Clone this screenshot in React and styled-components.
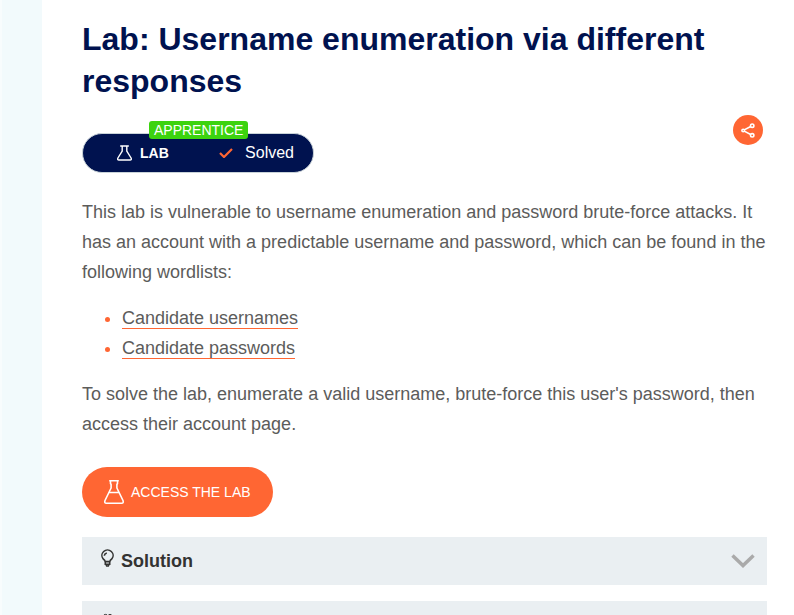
import React from "react";
import styled, { createGlobalStyle } from "styled-components";

const GlobalStyle = createGlobalStyle`
  * { box-sizing: border-box; }
  body {
    margin: 0;
    background: #fff;
    color: #5c5c5b;
    font-family: "Liberation Sans", Arial, sans-serif;
    font-size: 18px;
    line-height: 30px;
  }
`;

const Page = styled.div`
  display: flex;
  height: 100vh;
  overflow: hidden;
`;

const Rail = styled.aside`
  flex: 0 0 42px;
  background: #f2fafc;
  border-left: 2px solid #f8fcfd;
`;

const Main = styled.main`
  flex: 1;
  min-width: 0;
  padding: 18px 27px 0 40px;
`;

const Title = styled.h1`
  margin: 0;
  color: #00124f;
  font-size: 32px;
  line-height: 42px;
`;

const StatusRow = styled.div`
  display: flex;
  justify-content: space-between;
  align-items: flex-start;
  margin-top: 13px;
  padding-right: 4px;
`;

const Status = styled.div`
  position: relative;
  display: flex;
  align-items: center;
  width: 232px;
  height: 40px;
  margin-top: 18px;
  padding: 0 19px 0 34px;
  border: 1px solid #c9d3d8;
  border-radius: 20px;
  background: #00124f;
  color: #fff;
  font-size: 16px;
  line-height: 20px;
`;

const Level = styled.span`
  position: absolute;
  top: -13px;
  left: 66px;
  padding: 0 5px;
  border-radius: 3px;
  background: #3cd30f;
  font-size: 14px;
  line-height: 18px;
`;

const Kind = styled.strong`
  margin: 0 auto 0 8px;
  font-size: 14px;
`;

const Solved = styled.span`
  margin-left: 12px;
`;

const Share = styled.button`
  display: grid;
  place-items: center;
  width: 30px;
  height: 30px;
  padding: 0;
  border: 0;
  border-radius: 50%;
  background: #ff6633;
  cursor: pointer;
`;

const Text = styled.p`
  margin: ${({ $top }) => $top}px 0 0;
`;

const List = styled.ul`
  margin: 16px 0 0;
  padding-left: 40px;
  li::marker { color: #ff6633; }
`;

const WordlistLink = styled.a`
  border-bottom: 1px solid #ff6633;
  color: inherit;
  text-decoration: none;
`;

const AccessButton = styled.a`
  display: inline-flex;
  align-items: center;
  gap: 6px;
  height: 50px;
  margin-top: 28px;
  padding: 0 22px 0 21px;
  border-radius: 25px;
  background: #ff6633;
  color: #fff;
  font-size: 14px;
  line-height: 20px;
  text-decoration: none;
  vertical-align: top;
`;

const Panel = styled.button`
  display: flex;
  align-items: center;
  width: 100%;
  height: 48px;
  margin-top: ${({ $top }) => $top}px;
  padding: 0 12px 0 18px;
  border: 0;
  background: #eaeff2;
  color: #333332;
  font: bold 18px/30px "Liberation Sans", Arial, sans-serif;
  text-align: left;
  cursor: pointer;
`;

const PanelIcon = styled.svg`
  align-self: flex-start;
  margin: 12px 6px 0 0;
`;

const PanelLabel = styled.span`
  flex: 1;
`;

const Chevron = () => (
  <svg width="24" height="14" viewBox="0 0 24 14" fill="none" stroke="#aaa" strokeWidth="3.5" aria-hidden="true">
    <path d="M1.5 1.5 12 11.5 22.5 1.5" />
  </svg>
);

export default function App() {
  return (
    <>
      <GlobalStyle />
      <Page>
        <Rail />
        <Main>
          <Title>Lab: Username enumeration via different responses</Title>
          <StatusRow>
            <Status>
              <Level>APPRENTICE</Level>
              <svg width="15" height="16" viewBox="0 0 15 16" fill="none" stroke="#fff" strokeWidth="1.4" strokeLinejoin="round" aria-hidden="true">
                <path d="M3.2 1h8.6M5.2 1v5.2L.9 13q-.8 2 1 2h11.2q1.8 0 1-2L9.8 6.2V1" />
              </svg>
              <Kind>LAB</Kind>
              <svg width="14" height="10" viewBox="0 0 14 10" fill="none" stroke="#ff6633" strokeWidth="2.2" aria-hidden="true">
                <path d="M1 5l4 4 8-8" />
              </svg>
              <Solved>Solved</Solved>
            </Status>
            <Share type="button" aria-label="Share">
              <svg width="14" height="15" viewBox="0 0 14 15" fill="none" stroke="#fff" strokeWidth="1.6" aria-hidden="true">
                <circle cx="2.2" cy="7.5" r="1.3" />
                <circle cx="11.2" cy="2.7" r="1.7" />
                <circle cx="11.2" cy="12.3" r="1.7" />
                <path d="M3.2 6.9 9.7 3.5M3.2 8.1 9.7 11.5" />
              </svg>
            </Share>
          </StatusRow>
          <Text $top={24}>
            This lab is vulnerable to username enumeration and password brute-force attacks. It has an
            account with a predictable username and password, which can be found in the following wordlists:
          </Text>
          <List>
            <li><WordlistLink href="#usernames">Candidate usernames</WordlistLink></li>
            <li><WordlistLink href="#passwords">Candidate passwords</WordlistLink></li>
          </List>
          <Text $top={16}>
            To solve the lab, enumerate a valid username, brute-force this user's password, then access
            their account page.
          </Text>
          <AccessButton href="#lab">
            <svg width="22" height="26" viewBox="0 0 22 26" fill="none" stroke="#fff" strokeWidth="1.6" strokeLinejoin="round" aria-hidden="true">
              <path d="M6.2 1.8h9.6M7.5 2v2.5l.6 1V9L2 21.5Q1.1 24.2 3.4 24.2h15.2q2.3 0 1.4-2.7L13.9 9V5.5l.6-1V2M6 13.5h10" />
            </svg>
            ACCESS THE LAB
          </AccessButton>
          <Panel type="button" $top={20}>
            <PanelIcon width="15" height="19" viewBox="0 0 15 19" fill="none" stroke="#333332" strokeWidth="1.6" aria-hidden="true">
              <path d="M5.2 12.6Q5 11.3 3.2 9.9A5.6 5.4 0 1 1 11.8 9.9Q10 11.3 9.8 12.6ZM5.3 12.6v2.6h4.4v-2.6M5.9 15.2l.8 1.8h1.6l.8-1.8M4.3 6.7Q4.5 4.5 6.8 3.9" />
            </PanelIcon>
            <PanelLabel>Solution</PanelLabel>
            <Chevron />
          </Panel>
          <Panel type="button" $top={16} aria-label="Expand section">
            <PanelIcon width="15" height="19" viewBox="0 0 15 19" fill="none" stroke="#333332" aria-hidden="true">
              <circle cx="5.5" cy="3.4" r="2" />
              <circle cx="10" cy="3.4" r="2" />
              <path d="M2 12V9q0-3 3.5-3T9 9v3M9 6q4 0 4 3v3" />
            </PanelIcon>
            <PanelLabel />
            <Chevron />
          </Panel>
        </Main>
      </Page>
    </>
  );
}
